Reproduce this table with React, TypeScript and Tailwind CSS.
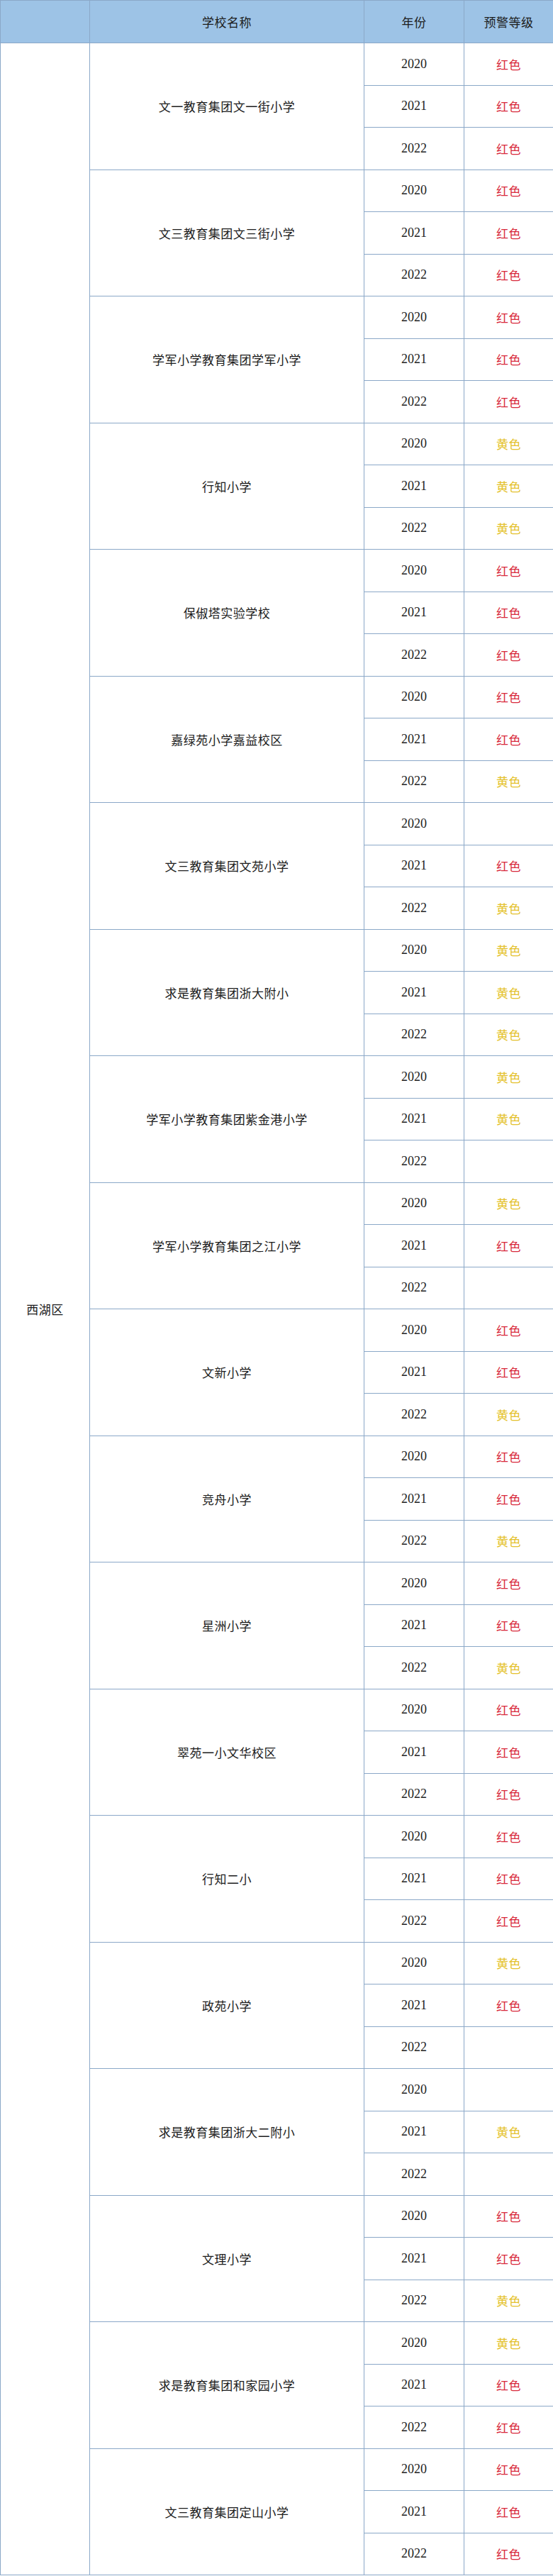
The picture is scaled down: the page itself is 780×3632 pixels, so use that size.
import React from 'react'

type Level = '红色' | '黄色' | ''

const schools: { name: string; levels: Level[] }[] = [
  { name: '文一教育集团文一街小学', levels: ['红色', '红色', '红色'] },
  { name: '文三教育集团文三街小学', levels: ['红色', '红色', '红色'] },
  { name: '学军小学教育集团学军小学', levels: ['红色', '红色', '红色'] },
  { name: '行知小学', levels: ['黄色', '黄色', '黄色'] },
  { name: '保俶塔实验学校', levels: ['红色', '红色', '红色'] },
  { name: '嘉绿苑小学嘉益校区', levels: ['红色', '红色', '黄色'] },
  { name: '文三教育集团文苑小学', levels: ['', '红色', '黄色'] },
  { name: '求是教育集团浙大附小', levels: ['黄色', '黄色', '黄色'] },
  { name: '学军小学教育集团紫金港小学', levels: ['黄色', '黄色', ''] },
  { name: '学军小学教育集团之江小学', levels: ['黄色', '红色', ''] },
  { name: '文新小学', levels: ['红色', '红色', '黄色'] },
  { name: '竞舟小学', levels: ['红色', '红色', '黄色'] },
  { name: '星洲小学', levels: ['红色', '红色', '黄色'] },
  { name: '翠苑一小文华校区', levels: ['红色', '红色', '红色'] },
  { name: '行知二小', levels: ['红色', '红色', '红色'] },
  { name: '政苑小学', levels: ['黄色', '红色', ''] },
  { name: '求是教育集团浙大二附小', levels: ['', '黄色', ''] },
  { name: '文理小学', levels: ['红色', '红色', '黄色'] },
  { name: '求是教育集团和家园小学', levels: ['黄色', '红色', '红色'] },
  { name: '文三教育集团定山小学', levels: ['红色', '红色', '红色'] },
]

const years = ['2020', '2021', '2022']

const cjk = "font-['Noto_Sans_CJK_SC','Noto_Sans',sans-serif]"
const cell = 'border border-[#8ba8c8] text-center align-middle'

export default function App() {
  return (
    <div className="w-[780px] bg-white">
      <table className={`w-[780px] table-fixed border-collapse text-[17px] tracking-[0.5px] text-[#1c1c1c] ${cjk}`}>
        <colgroup>
          <col className="w-[126px]" />
          <col className="w-[387px]" />
          <col className="w-[141px]" />
          <col className="w-[126px]" />
        </colgroup>
        <thead>
          <tr className="h-[60px] bg-[#9dc3e6]">
            <th className={`${cell} font-normal`}></th>
            <th className={`${cell} font-normal`}>学校名称</th>
            <th className={`${cell} font-normal`}>年份</th>
            <th className={`${cell} font-normal`}>预警等级</th>
          </tr>
        </thead>
        <tbody>
          {schools.map((school, si) =>
            years.map((year, yi) => {
              const level = school.levels[yi]
              return (
                <tr key={`${si}-${year}`} className="h-[59.5px]">
                  {si === 0 && yi === 0 && (
                    <td rowSpan={schools.length * 3} className={cell}>
                      西湖区
                    </td>
                  )}
                  {yi === 0 && (
                    <td rowSpan={3} className={cell}>
                      {school.name}
                    </td>
                  )}
                  <td className={`${cell} font-['Liberation_Serif',serif] text-[18px] tracking-normal text-[#222]`}>
                    {year}
                  </td>
                  <td
                    className={`${cell} ${
                      level === '红色' ? 'text-[#d8293b]' : 'text-[#e4c12c]'
                    }`}
                  >
                    {level}
                  </td>
                </tr>
              )
            })
          )}
        </tbody>
      </table>
    </div>
  )
}
